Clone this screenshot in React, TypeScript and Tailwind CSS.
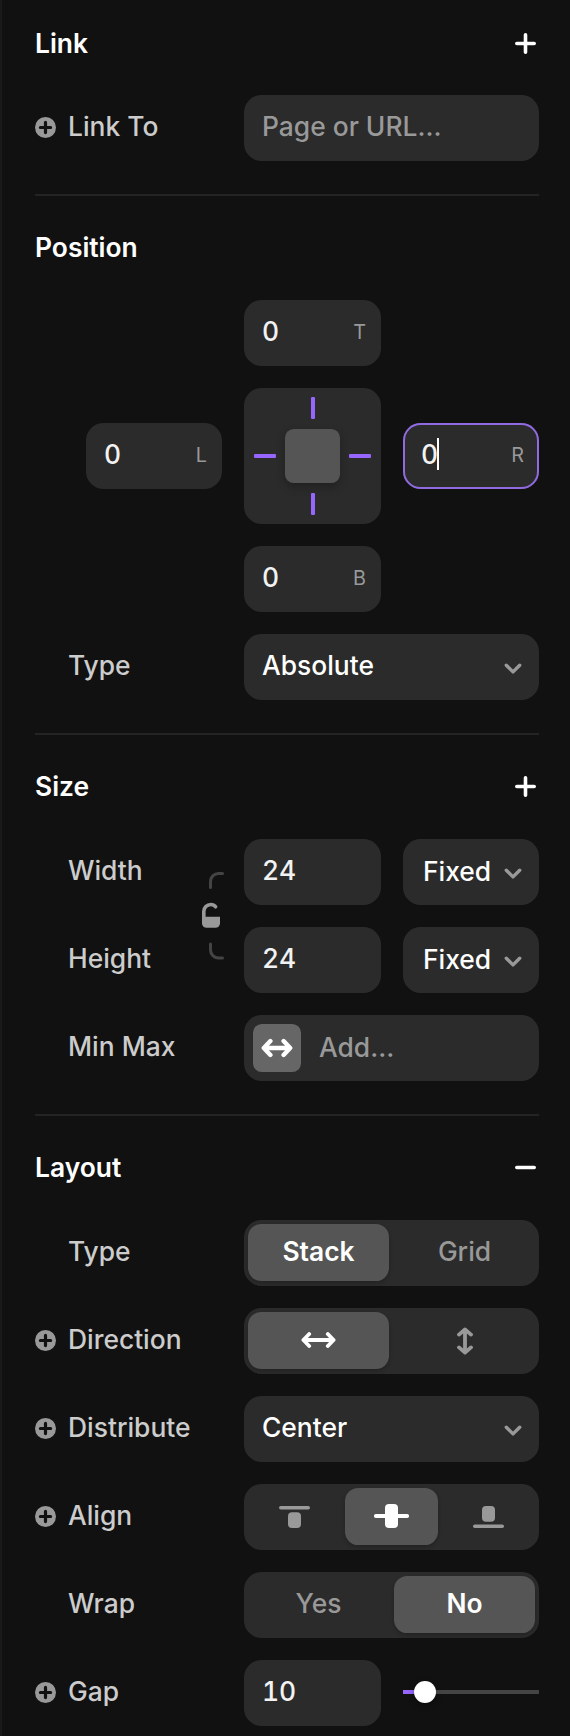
import React from 'react';

const PLUS = 'M10.5 1.8V19.2M1.8 10.5H19.2';

function Header({ title, action }: { title: string; action?: 'plus' | 'minus' }) {
  return (
    <div className="flex h-[104px] items-center justify-between pb-px pr-[3px] text-[26.4px] font-semibold text-white">
      <span className="-translate-y-[0.5px]">{title}</span>
      {action && (
        <svg className="h-[21px] w-[21px]" viewBox="0 0 21 21" fill="none" stroke="currentColor" strokeWidth="3.6" strokeLinecap="round">
          <path d={action === 'plus' ? PLUS : 'M1.8 10.5H19.2'} />
        </svg>
      )}
    </div>
  );
}

function Divider() {
  return <div className="mt-[33px] h-[2px] bg-[#242424]" />;
}

function Row({ label, plus, children }: { label: string; plus?: boolean; children: React.ReactNode }) {
  return (
    <div className="flex h-[66px] items-center">
      <div className="flex w-[209px] shrink-0 items-center">
        <span className="flex w-[33px] pb-px">
          {plus && (
            <svg className="h-[21px] w-[21px]" viewBox="0 0 21 21" fill="none">
              <circle cx="10.5" cy="10.5" r="10.5" fill="#999" />
              <path d="M10.5 5.4V15.6M5.4 10.5H15.6" stroke="#111" strokeWidth="3.2" strokeLinecap="round" />
            </svg>
          )}
        </span>
        <span className="-translate-y-[1.6px] whitespace-nowrap text-[#ccc]">{label}</span>
      </div>
      {children}
    </div>
  );
}

function Chevron() {
  return (
    <svg className="h-[11px] w-[18px] translate-y-px" viewBox="0 0 18 11" fill="none" stroke="#999" strokeWidth="3.4" strokeLinecap="round" strokeLinejoin="round">
      <path d="M2.3 2.2L9 8.9L15.7 2.2" />
    </svg>
  );
}

function NumberField({ value, unit, focused }: { value: string; unit?: string; focused?: boolean }) {
  return (
    <div
      className={
        'flex h-[66px] items-center justify-between rounded-[17.6px] bg-[#2b2b2b] pl-[18px] pr-[15px] ' +
        (focused ? 'shadow-[inset_0_0_0_2px_#8f6ae0]' : '')
      }
    >
      <span className="flex -translate-y-[2px] items-center tabular-nums text-[#f2f2f2]">
        {value}
        {focused && <i className="-ml-px h-8 w-[2px] bg-white" />}
      </span>
      {unit && <span className="text-[19.8px] font-normal text-[#999]">{unit}</span>}
    </div>
  );
}

function Select({ value }: { value: string }) {
  return (
    <div className="flex h-[66px] flex-1 items-center justify-between rounded-[17.6px] bg-[#2b2b2b] pl-[18px] pr-[17px] text-white">
      <span className="-translate-y-[2.4px]">{value}</span>
      <Chevron />
    </div>
  );
}

function FixedSelect() {
  return (
    <div className="flex h-[66px] w-[136px] items-center justify-between rounded-[17.6px] bg-[#2b2b2b] pl-[20px] pr-[17px] text-white">
      <span className="-translate-y-[0.6px]">Fixed</span>
      <Chevron />
    </div>
  );
}

function Segmented({ items, active }: { items: React.ReactNode[]; active: number }) {
  return (
    <div className="flex h-[66px] flex-1 gap-[5px] rounded-[17.6px] bg-[#2b2b2b] p-1 pb-[5px]">
      {items.map((item, i) => (
        <div
          key={i}
          className={
            'flex flex-1 basis-0 items-center justify-center rounded-[13.2px] ' +
            (i === active ? 'bg-[#555] font-semibold text-white shadow-[0_2px_4px_rgba(0,0,0,0.2)]' : 'text-[#999]')
          }
        >
          {item}
        </div>
      ))}
    </div>
  );
}

function ArrowH() {
  return (
    <svg className="mb-px h-[16px] w-[35px]" viewBox="0 0 35 16" fill="none" stroke="currentColor" strokeWidth="3.8" strokeLinecap="round" strokeLinejoin="round">
      <path d="M2.4 8H32.6M8.2 2L2.4 8L8.2 14M26.8 2L32.6 8L26.8 14" />
    </svg>
  );
}

function ArrowV() {
  return (
    <svg className="h-[28px] w-[16px]" viewBox="0 0 16 28" fill="none" stroke="currentColor" strokeWidth="3.8" strokeLinecap="round" strokeLinejoin="round">
      <path d="M8 2.4V25.6M2 7.6L8 2.4L14 7.6M2 20.4L8 25.6L14 20.4" />
    </svg>
  );
}

function AlignIcon({ kind }: { kind: 'top' | 'middle' | 'bottom' }) {
  return (
    <svg className="mb-px h-[24px] w-[35px]" viewBox="0 0 35 24" fill="currentColor">
      {kind === 'top' && (
        <>
          <rect x="2" y="2" width="31" height="3.5" rx="1.75" />
          <rect x="11" y="8.3" width="13" height="15.7" rx="4" />
        </>
      )}
      {kind === 'middle' && (
        <>
          <rect x="0" y="10" width="35" height="4" rx="1.8" />
          <rect x="11" y="0" width="13" height="24" rx="4" />
        </>
      )}
      {kind === 'bottom' && (
        <>
          <rect x="2" y="20.5" width="31" height="3.5" rx="1.75" />
          <rect x="11" y="2" width="13" height="15.7" rx="4" />
        </>
      )}
    </svg>
  );
}

function RatioLock() {
  return (
    <svg className="h-[96px] w-[22px]" viewBox="0 0 22 96" fill="none">
      <path d="M8.5 17.5V11.5A8 8 0 0 1 16.5 3.5H20.5M8.5 74V80A8 8 0 0 0 16.5 88H20.5" stroke="#444" strokeWidth="3" strokeLinecap="round" />
      <path d="M1.8 50V41.5A7 7 0 0 1 8.8 34.5Q12 34.5 13.6 36.8" stroke="#999" strokeWidth="3.6" strokeLinecap="round" />
      <path d="M0 46.7H18V53.2A4.5 4.5 0 0 1 13.5 57.7H4.5A4.5 4.5 0 0 1 0 53.2Z" fill="#999" />
    </svg>
  );
}

function Pins() {
  return (
    <div className="grid h-[136px] grid-cols-[22px_55px_22px] grid-rows-[22px_54px_22px] place-content-center place-items-center gap-x-[9px] gap-y-[10px] rounded-[17.6px] bg-[#2b2b2b]">
      <i className="col-start-2 h-[22px] w-1 rounded-[1px] bg-[#9666ff]" />
      <i className="col-start-1 row-start-2 h-1 w-[22px] rounded-[1px] bg-[#9666ff]" />
      <i className="col-start-2 row-start-2 h-[54px] w-[55px] rounded-[8.8px] bg-[#555] shadow-[0_4px_9px_rgba(0,0,0,0.25)]" />
      <i className="col-start-3 row-start-2 h-1 w-[22px] rounded-[1px] bg-[#9666ff]" />
      <i className="col-start-2 row-start-3 h-[22px] w-1 rounded-[1px] bg-[#9666ff]" />
    </div>
  );
}

export default function App() {
  return (
    <div className="h-[1736px] w-[570px] overflow-hidden border-l-2 border-[#1a1a1a] bg-[#111] pl-[33px] pr-[31px] font-['Inter',sans-serif] text-[26.4px] font-medium leading-none">
      <div className="-mb-px -mt-[8px]">
        <Header title="Link" action="plus" />
      </div>
      <Row label="Link To" plus>
        <div className="flex h-[66px] flex-1 items-center rounded-[17.6px] bg-[#2b2b2b] pl-[18px] text-[#999]">
          <span className="-translate-y-[2px]">Page or URL…</span>
        </div>
      </Row>
      <Divider />

      <Header title="Position" />
      <div className="mb-[22px] grid grid-cols-[136px_137px_136px] items-center gap-[22px] pl-[51px]">
        <div className="col-start-2">
          <NumberField value="0" unit="T" />
        </div>
        <div className="col-start-1">
          <NumberField value="0" unit="L" />
        </div>
        <Pins />
        <NumberField value="0" unit="R" focused />
        <div className="col-start-2">
          <NumberField value="0" unit="B" />
        </div>
      </div>
      <Row label="Type">
        <Select value="Absolute" />
      </Row>
      <Divider />

      <Header title="Size" action="plus" />
      <div className="flex h-[154px]">
        <div className="flex w-[167px] flex-col gap-[22px]">
          <Row label="Width">{null}</Row>
          <Row label="Height">{null}</Row>
        </div>
        <div className="flex w-[42px] items-start pt-[31px]">
          <RatioLock />
        </div>
        <div className="grid grid-cols-[137px_136px] gap-[22px]">
          <NumberField value="24" />
          <FixedSelect />
          <NumberField value="24" />
          <FixedSelect />
        </div>
      </div>
      <div className="mt-[22px]">
        <Row label="Min Max">
          <div className="flex h-[66px] flex-1 items-center rounded-[17.6px] bg-[#2b2b2b] pl-[9px] text-[#999]">
            <span className="flex h-12 w-12 items-center justify-center rounded-[8.8px] bg-[#666]">
              <svg className="h-[20px] w-[32px]" viewBox="0 0 32 20" fill="none" stroke="#fff" strokeWidth="4.4" strokeLinecap="round" strokeLinejoin="round">
                <path d="M3 10H29M9.4 3L2.8 10L9.4 17M22.6 3L29.2 10L22.6 17" />
              </svg>
            </span>
            <span className="-translate-y-[0.6px] pl-[18px]">Add…</span>
          </div>
        </Row>
      </div>
      <Divider />

      <Header title="Layout" action="minus" />
      <div className="flex flex-col gap-[22px]">
        <Row label="Type">
          <Segmented active={0} items={[<span className="-translate-y-px">Stack</span>, <span className="-translate-y-px">Grid</span>]} />
        </Row>
        <Row label="Direction" plus>
          <Segmented active={0} items={[<ArrowH />, <ArrowV />]} />
        </Row>
        <Row label="Distribute" plus>
          <Select value="Center" />
        </Row>
        <Row label="Align" plus>
          <Segmented active={1} items={[<AlignIcon kind="top" />, <AlignIcon kind="middle" />, <AlignIcon kind="bottom" />]} />
        </Row>
        <Row label="Wrap">
          <Segmented active={1} items={[<span className="-translate-y-px">Yes</span>, <span className="-translate-y-px">No</span>]} />
        </Row>
        <Row label="Gap" plus>
          <div className="grid flex-1 grid-cols-[137px_136px] items-center gap-[22px]">
            <NumberField value="10" />
            <div className="flex items-center pb-[2px]">
              <i className="h-1 w-[11px] bg-[#9666ff]" />
              <i className="h-[22px] w-[22px] rounded-full bg-white shadow-[0_2px_6px_rgba(0,0,0,0.4)]" />
              <i className="h-1 flex-1 bg-[#444]" />
            </div>
          </div>
        </Row>
      </div>
    </div>
  );
}
